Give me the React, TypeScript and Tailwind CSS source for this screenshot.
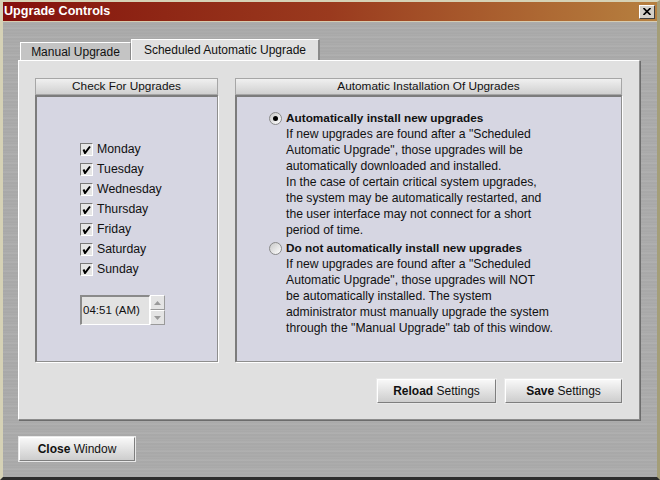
import React from 'react';

const metal =
	"bg-[#aaaaaa] bg-[repeating-linear-gradient(180deg,#a7a7a7_0px,#b1b1b1_1px,#a3a3a3_2px,#adadad_3px,#a8a8a8_5px,#b3b3b3_6px,#a5a5a5_8px,#acacac_9px)]";

function Check({ label }: { label: string }) {
	return (
		<div className="flex items-center h-[20px]">
			<span className="w-[13px] h-[13px] border border-t-[#7a7a7a] border-l-[#7a7a7a] border-r-white border-b-white bg-[#e6e6e6] flex items-center justify-center">
				<svg width="9" height="9" viewBox="0 0 9 9">
					<path d="M1.5 4.5 L3 8 L8 1.5" stroke="#000" strokeWidth="2" fill="none" />
				</svg>
			</span>
			<span className="ml-[4px] text-[12.3px] text-[#111]">{label}</span>
		</div>
	);
}

function Radio({ on }: { on?: boolean }) {
	return (
		<span className="w-[13px] h-[13px] shrink-0 rounded-full border border-[#8a8a8a] bg-gradient-to-br from-[#c8c8c8] to-white flex items-center justify-center">
			{on ? <span className="w-[5px] h-[5px] rounded-full bg-black" /> : null}
		</span>
	);
}

function Group({
	title,
	className,
	children,
}: {
	title: string;
	className: string;
	children?: React.ReactNode;
}) {
	return (
		<div className={`flex flex-col ${className}`}>
			<div className="h-[17px] border border-[#a6a6a6] bg-gradient-to-b from-[#f0f0f0] to-[#d0d0d0] text-[11.8px] leading-[15px] text-center text-[#111]">
				{title}
			</div>
			<div className="flex-1 bg-[#d6d6e2] border-t-2 border-l-2 border-r border-b border-t-[#7c7c7c] border-l-[#7c7c7c] border-r-[#8e8e8e] border-b-[#8e8e8e] shadow-[1px_1px_0_#ffffff]">
				{children}
			</div>
		</div>
	);
}

function Btn({ bold, rest, w }: { bold: string; rest: string; w: string }) {
	return (
		<div
			className={`${w} h-[24px] border border-t-white border-l-white border-r-[#7e7e7e] border-b-[#7e7e7e] shadow-[0_0_0_1px_#e8e8e8] bg-gradient-to-b from-[#f8f8f8] to-[#cdcdcd] flex items-center justify-center text-[12px] text-[#111]`}
		>
			<span className="font-bold">{bold}</span>&nbsp;{rest}
		</div>
	);
}

export default function App() {
	return (
		<div className="w-[660px] h-[480px] flex flex-col border-l-[3px] border-t-2 border-r-[3px] border-b-[3px] border-l-[#d6d2b6] border-t-[#d6d2b6] border-r-[#a49e78] border-b-[#2c2c2c] font-['Liberation_Sans',Arial,sans-serif] overflow-hidden">
			{/* title bar */}
			<div className="h-[20px] shrink-0 flex items-center justify-between pl-[1px] pr-[2px] border-b border-[#d8ccb0] bg-gradient-to-r from-[#840e0c] via-[#9a3a1e] to-[#b6803f]">
				<span className="text-white font-bold text-[12.6px] leading-none">Upgrade Controls</span>
				<span className="w-[16px] h-[14px] bg-[#d4d0c8] border border-t-white border-l-white border-r-[#404040] border-b-[#404040] flex items-center justify-center">
					<svg width="8" height="7" viewBox="0 0 8 7">
						<path d="M0.5 0 L7.5 7 M7.5 0 L0.5 7" stroke="#000" strokeWidth="1.6" />
					</svg>
				</span>
			</div>

			{/* body */}
			<div className={`flex-1 ${metal} pl-[15px] pt-[17px]`}>
				{/* tabs */}
				<div className="flex items-end h-[21px]">
					<div className="ml-[2px] w-[111px] h-[18px] bg-[#c4c4c4] border-t border-l border-white border-r border-r-[#8a8a8a] text-[12px] text-[#111] flex items-center justify-center">
						Manual Upgrade
					</div>
					<div className="w-[189px] h-[21px] bg-[#e0e0e0] border-t border-l border-white border-r-2 border-r-[#8a8a8a] text-[12px] text-[#111] flex items-center justify-center pb-[1px]">
						Scheduled Automatic Upgrade
					</div>
				</div>

				{/* panel */}
				<div className="w-[622px] h-[360px] bg-[#e0e0e0] border-t border-l border-white border-r border-b border-r-[#8c8c8c] border-b-[#8c8c8c] shadow-[1px_1px_0_#6c6c6c] pt-[17px] pl-[16px] flex flex-col">
					<div className="flex gap-[17px] h-[284px]">
						<Group title="Check For Upgrades" className="w-[183px]">
							<div className="pt-[42px] pl-[43px] flex flex-col">
								<Check label="Monday" />
								<Check label="Tuesday" />
								<Check label="Wednesday" />
								<Check label="Thursday" />
								<Check label="Friday" />
								<Check label="Saturday" />
								<Check label="Sunday" />
								<div className="mt-[16px] flex">
									<div className="w-[70px] h-[30px] bg-[#e2e2e2] border-t-2 border-l-2 border-[#8a8a8a] border-r border-b border-r-white border-b-white flex items-center pl-[1px] text-[11.5px] text-[#111]">
										04:51 (AM)
									</div>
									<div className="flex flex-col">
										<div className="w-[15px] h-[15px] bg-[#e4e4e4] border border-t-white border-l-white border-r-[#9a9a9a] border-b-[#9a9a9a] flex items-center justify-center">
											<svg width="7" height="4" viewBox="0 0 7 4">
												<path d="M3.5 0 L7 4 L0 4 Z" fill="#9a9a9a" />
											</svg>
										</div>
										<div className="w-[15px] h-[15px] bg-[#e4e4e4] border border-t-white border-l-white border-r-[#9a9a9a] border-b-[#9a9a9a] flex items-center justify-center">
											<svg width="7" height="4" viewBox="0 0 7 4">
												<path d="M0 0 L7 0 L3.5 4 Z" fill="#9a9a9a" />
											</svg>
										</div>
									</div>
								</div>
							</div>
						</Group>
						<Group title="Automatic Installation Of Upgrades" className="w-[387px]">
							<div className="pt-[13px] pl-[32px] text-[12.2px] leading-[16px] text-[#111]">
								<div className="flex items-center gap-[4px]">
									<Radio on />
									<span className="font-bold text-[11.8px]">Automatically install new upgrades</span>
								</div>
								<div className="pl-[17px]">
									If new upgrades are found after a "Scheduled
									<br />
									Automatic Upgrade", those upgrades will be
									<br />
									automatically downloaded and installed.
									<br />
									In the case of certain critical system upgrades,
									<br />
									the system may be automatically restarted, and
									<br />
									the user interface may not connect for a short
									<br />
									period of time.
								</div>
								<div className="flex items-center gap-[4px] mt-[2px]">
									<Radio />
									<span className="font-bold text-[11.8px]">Do not automatically install new upgrades</span>
								</div>
								<div className="pl-[17px]">
									If new upgrades are found after a "Scheduled
									<br />
									Automatic Upgrade", those upgrades will NOT
									<br />
									be automatically installed. The system
									<br />
									administrator must manually upgrade the system
									<br />
									through the "Manual Upgrade" tab of this window.
								</div>
							</div>
						</Group>
					</div>
					<div className="flex justify-end gap-[9px] mt-[17px] pr-[17px]">
						<Btn bold="Reload" rest="Settings" w="w-[119px]" />
						<Btn bold="Save" rest="Settings" w="w-[117px]" />
					</div>
				</div>

				<div className="mt-[17px] ml-[1px]">
					<Btn bold="Close" rest="Window" w="w-[116px]" />
				</div>
			</div>
		</div>
	);
}
